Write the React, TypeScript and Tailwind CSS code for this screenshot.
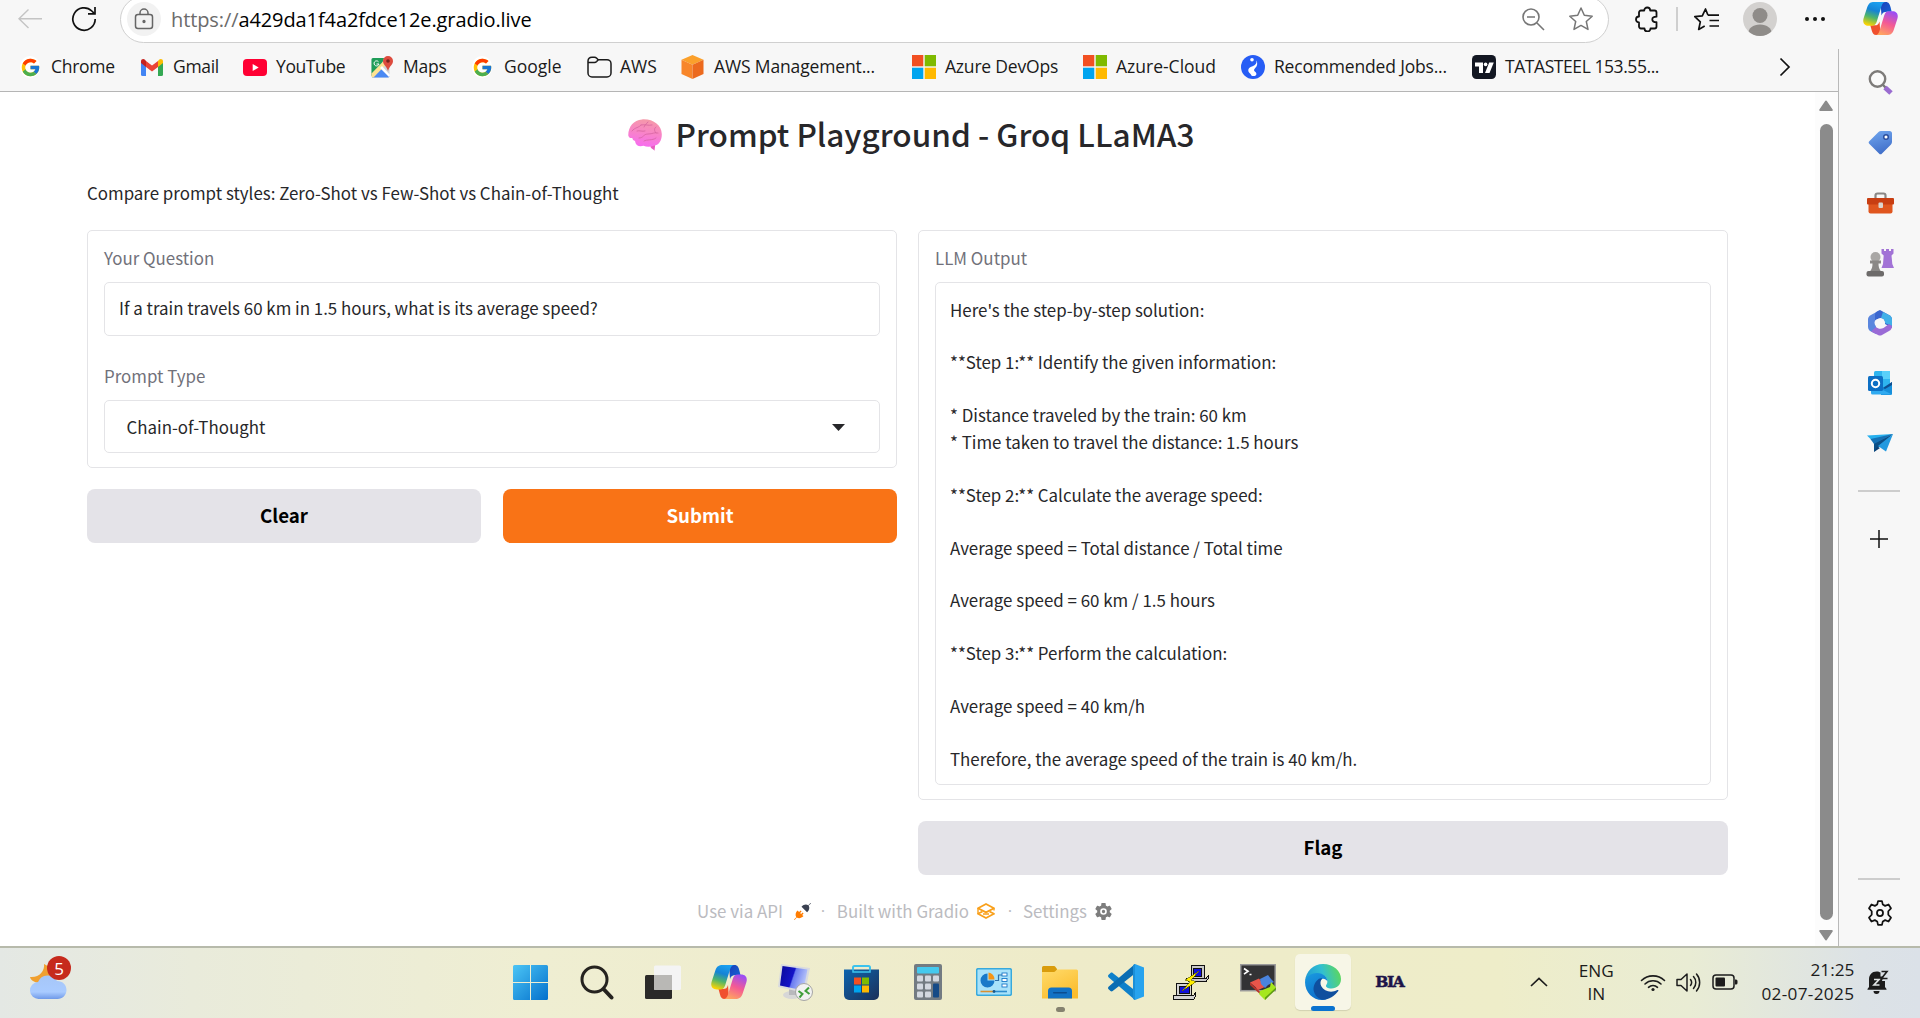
import type { ReactNode } from "react";
import { FcGoogle } from "react-icons/fc";

const UI = "font-['Open_Sans',sans-serif]";
const SRC = "font-['Noto_Sans_CJK_SC',sans-serif]";

function Copilot({ id, className }: { id: string; className: string }) {
  return (
    <svg viewBox="0 0 36 36" className={className}>
      <defs>
        <linearGradient id={id + "a"} x1="0.6" y1="0" x2="0.3" y2="1">
          <stop offset="0" stopColor="#1aa0f0" />
          <stop offset="0.35" stopColor="#1583d6" />
          <stop offset="0.65" stopColor="#4fb56a" />
          <stop offset="1" stopColor="#ffd400" />
        </linearGradient>
        <linearGradient id={id + "b"} x1="0.7" y1="0" x2="0.3" y2="1">
          <stop offset="0" stopColor="#9a4df5" />
          <stop offset="0.5" stopColor="#f45a94" />
          <stop offset="1" stopColor="#ffa560" />
        </linearGradient>
        <linearGradient id={id + "c"} x1="0" y1="0" x2="1" y2="1">
          <stop offset="0" stopColor="#1a3fb8" />
          <stop offset="1" stopColor="#1466d8" />
        </linearGradient>
      </defs>
      <path d="M18 1h5.500c3 0 4 2.200 4.800 5.200L29.500 11H25c-3.500 0-5 1-6 4z" fill={`url(#${id}c)`} />
      <path d="M18 35h-4.500c-2.600 0-3.800-1.800-4.500-4.600L7.500 25H12c3 0 4-1 5-4z" fill="#f0502e" />
      <path d="M11.500 1H23c-2.200.2-3.200 2-4 4.500l-4.800 15.700C13.300 24 12 25.500 9.200 25.500H6C1 25.500-.7 22 .7 17.500L4.500 6C5.800 2.400 7.800 1 11.500 1z" fill={`url(#${id}a)`} />
      <path d="M24.500 35H13c2.200-.2 3.200-2 4-4.500l4.800-15.700c.9-2.800 2.200-4.300 5-4.300H30c5 0 6.700 3.500 5.300 8L31.500 30c-1.300 3.600-3.300 5-7 5z" fill={`url(#${id}b)`} />
    </svg>
  );
}

const Gmail = () => (
  <svg viewBox="0 0 22 17" className="h-[17px] w-[22px]">
    <path d="M0 2.500V15.500a1.500 1.500 0 0 0 1.500 1.500H5V7z" fill="#4285f4" />
    <path d="M17 7v10h3.500a1.500 1.500 0 0 0 1.500-1.500V3z" fill="#34a853" />
    <path d="M17 2v6l5-4V2.500C22 0 19.500-.5 18 .8z" fill="#fbbc04" />
    <path d="M5 8V2l6 4.600L17 2v6l-6 4.500z" fill="#ea4335" />
    <path d="M0 2.500V4l5 4V2L4 .8C2.500-.5 0 0 0 2.500z" fill="#c5221f" />
  </svg>
);

const YouTube = () => (
  <svg viewBox="0 0 24 17" className="h-[17px] w-[24px]">
    <rect width="24" height="17" rx="4" fill="#ff0033" />
    <path d="M9.700 4.900v7.200l6-3.600z" fill="#fff" />
  </svg>
);

const Maps = () => (
  <svg viewBox="0 0 22 22" className="h-[22px] w-[22px]">
    <rect x="0.500" y="2" width="18" height="19.500" rx="1.500" fill="#cfd4d8" />
    <path d="M2 2h11l-3 9-9.500 9V3.500A1.500 1.500 0 0 1 2 2z" fill="#1f9d58" />
    <path d="M9.500 11.500l9 9.200c-.3.500-.8.800-1.500.8H1z" fill="#4a89f3" />
    <path d="M.5 17.500L13 4.500l3 3L2.500 21.500H2A1.500 1.500 0 0 1 .5 20z" fill="#fde293" />
    <path d="M11 10l8 9-1 2L9 12z" fill="#fff" />
    <path d="M7.500 5.800A2.500 2.500 0 1 0 8 8H5.500" stroke="#fff" strokeWidth="1" fill="none" />
    <path d="M17 0a5 5 0 0 0-5 5c0 4 3.500 4.600 5 10 1.500-5.400 5-6 5-10a5 5 0 0 0-5-5z" fill="#dd4b3e" />
    <circle cx="17" cy="5" r="1.800" fill="#7a231c" />
  </svg>
);

const Folder = () => (
  <svg viewBox="0 0 25 22" className="h-[22px] w-[25px]" fill="none" stroke="#1b1b1b" strokeWidth="1.500">
    <path d="M1 5a4 4 0 0 1 4-3.800h2.500c1 0 1.600.4 2.200 1l1.500 1.500H20a4 4 0 0 1 4 4V17a4 4 0 0 1-4 4H5a4 4 0 0 1-4-4z" />
    <path d="M1 6.500h6.500c1 0 1.600-.4 2.200-1l1.500-1.700" />
  </svg>
);

const Cube = () => (
  <svg viewBox="0 0 22 24" className="h-[24px] w-[23px]">
    <path d="M11 0l11 4.800L11 9.800 0 4.800z" fill="#fba02b" />
    <path d="M0 4.800l11 5V24L0 19z" fill="#f8862a" />
    <path d="M22 4.800l-11 5V24l11-5z" fill="#ec6a1e" />
  </svg>
);

const Microsoft = () => (
  <svg viewBox="0 0 24 24" className="h-[24px] w-[24px]">
    <path d="M0 0h11.300v11.300H0z" fill="#f25022" />
    <path d="M12.700 0H24v11.300H12.700z" fill="#7fba00" />
    <path d="M0 12.700h11.300V24H0z" fill="#00a4ef" />
    <path d="M12.700 12.700H24V24H12.700z" fill="#ffb900" />
  </svg>
);

const Jobs = () => (
  <svg viewBox="0 0 24 24" className="h-[24px] w-[24px]">
    <circle cx="12" cy="12" r="12" fill="#275df5" />
    <circle cx="11" cy="4.700" r="1.800" fill="#fff" />
    <path d="M15.500 5.500c.3 3-1 4.700-3.900 5.700-3 1-4.600 2.300-4.300 4.700.2 1.700 2.200 2.200 2.600 3.500.4 1.200 1 1.700 2.600 1.700 1.800 0 3-.9 2.900-2.400-.1-1.700-2.500-2.200-2.400-3.700.1-1.400 2.700-2.800 3.100-5.200.2-1.700 0-3.400-.6-4.300z" fill="#fff" />
  </svg>
);

const TradingView = () => (
  <svg viewBox="0 0 24 24" className="h-[24px] w-[24px]">
    <rect width="24" height="24" rx="4.500" fill="#131722" />
    <path d="M3 7.500h8V18H7v-6.500H3z" fill="#fff" />
    <circle cx="13.600" cy="9.400" r="1.800" fill="#fff" />
    <path d="M17.200 7.500h4.600L17.500 18H13z" fill="#fff" />
  </svg>
);

const G = () => (
  <div className="flex h-[22px] w-[20px] items-center justify-center rounded-full bg-white">
    <FcGoogle className="h-[21px] w-[21px] shrink-0" />
  </div>
);

function Bookmark({ icon, label, box, gap, track = "" }: { icon: ReactNode; label: string; box: string; gap: string; track?: string }) {
  return (
    <div className={`flex h-[26px] shrink-0 items-center whitespace-nowrap ${box} ${gap}`}>
      <div className="flex shrink-0 items-center">{icon}</div>
      <span className={`pb-[2px] ${track}`}>{label}</span>
    </div>
  );
}

function AddressRow() {
  return (
    <div className="flex h-[49px] items-start overflow-hidden">
      <div className="flex h-[38px] w-[120px] shrink-0 items-center">
        <svg viewBox="0 0 26 22" className="ml-[17px] h-[22px] w-[26px]" fill="none" stroke="#c4c4c4" strokeWidth="1.400">
          <path d="M25 10.700H2M11.500 1.500L2 10.700l9.500 9.300" />
        </svg>
        <svg viewBox="0 0 26 26" className="ml-[28px] h-[26px] w-[26px]" fill="none" stroke="#111" strokeWidth="1.700">
          <path d="M24.200 13A11.200 11.200 0 1 1 20.800 5l2.500 2.400" />
          <path d="M24 1v6.800h-7" />
        </svg>
      </div>
      <div className="-mt-[4px] flex h-[46.500px] w-[1489px] shrink-0 items-center rounded-full border-[1.500px] border-[#d0d0d0] bg-white pr-[14px] pl-[6px]">
        <div className="flex h-[34px] w-[34px] items-center justify-center rounded-full bg-[#f2f2f2]">
          <svg viewBox="0 0 20 22" className="h-[22px] w-[20px]" fill="none" stroke="#666" strokeWidth="1.500">
            <rect x="1.500" y="6.500" width="17" height="14" rx="2.500" />
            <path d="M6 6.500V5a4 4 0 0 1 8 0v1.500" />
            <circle cx="10" cy="13.500" r="0.900" fill="#666" />
          </svg>
        </div>
        <div className="ml-[10px] pt-[2px] text-[20px] leading-[28px] tracking-[-0.100px] text-black">
          <span className="text-[#6b6b6b]">https://</span>a429da1f4a2fdce12e.gradio.live
        </div>
        <svg viewBox="0 0 24 24" className="ml-auto h-[24px] w-[24px]" fill="none" stroke="#767676" strokeWidth="1.600">
          <circle cx="10" cy="10" r="8" />
          <path d="M6 10h8M16 16l7 7" />
        </svg>
        <svg viewBox="0 0 26 26" className="ml-[23px] h-[26px] w-[26px]" fill="none" stroke="#767676" strokeWidth="1.500" strokeLinejoin="round">
          <path d="M13 2l3.300 7.300 7.900.9-5.900 5.300 1.700 7.900-7-4-7 4 1.700-7.900-5.900-5.300 7.900-.9z" />
        </svg>
      </div>
      <div className="flex h-[38px] flex-1 items-center">
        <svg viewBox="0 0 24 26" className="ml-[26px] h-[26px] w-[24px]" fill="none" stroke="#111" strokeWidth="1.800" strokeLinejoin="round">
          <path d="M4 6.500a2 2 0 0 1 2-2h3.200a3 3 0 0 1 6 0h4.300a2 2 0 0 1 2 2v4.200c-3 0-4.200.7-4.200 2.700s1.200 2.700 4.200 2.700v4.400a2 2 0 0 1-2 2h-4a3 3 0 0 1-6 0H6a2 2 0 0 1-2-2v-4a3 3 0 0 1 0-6z" />
        </svg>
        <div className="ml-[17px] h-[24px] w-[1.500px] bg-[#cfcfcf]" />
        <svg viewBox="0 0 28 26" className="ml-[15px] h-[26px] w-[28px]" fill="none" stroke="#111" strokeWidth="1.700" strokeLinejoin="round">
          <path d="M15 9.200L12.500 3 9.300 9.800l-7.500.8 5.500 5.200L5.700 23.500l6-3.500M15 9.200h11M16.500 14.500H26M16.500 20H26" />
        </svg>
        <div className="ml-[22px] h-[34px] w-[34px] overflow-hidden rounded-full bg-[#d3d1cf]">
          <svg viewBox="0 0 34 34" className="h-full w-full" fill="#8f8c89">
            <circle cx="17" cy="13.500" r="7.500" />
            <path d="M5 33c0-7 5-10.500 12-10.500S29 26 29 33v1H5z" />
          </svg>
        </div>
        <svg viewBox="0 0 22 6" className="ml-[27px] h-[6px] w-[22px]" fill="#111">
          <circle cx="3" cy="3" r="2" />
          <circle cx="11" cy="3" r="2" />
          <circle cx="19" cy="3" r="2" />
        </svg>
      </div>
    </div>
  );
}

function Bookmarks() {
  return (
    <div className="flex h-[43px] items-start border-b border-[#b5b5b5] pt-[5px] pl-[20px] text-[17.500px] leading-[26px] text-[#1a1a1a]">
      <Bookmark icon={<G />} label="Chrome" box="w-[121px]" gap="gap-[11px]" track="tracking-[-0.3px]" />
      <Bookmark icon={<Gmail />} label="Gmail" box="w-[102px]" gap="gap-[10px]" track="tracking-[-0.3px]" />
      <Bookmark icon={<YouTube />} label="YouTube" box="w-[128px]" gap="gap-[9px]" track="tracking-[-0.4px]" />
      <Bookmark icon={<Maps />} label="Maps" box="w-[101px]" gap="gap-[10px]" track="tracking-[-0.2px]" />
      <Bookmark icon={<G />} label="Google" box="w-[115px]" gap="gap-[12px]" />
      <Bookmark icon={<Folder />} label="AWS" box="w-[94px]" gap="gap-[8px]" />
      <Bookmark icon={<Cube />} label="AWS Management..." box="w-[231px]" gap="gap-[10px]" track="tracking-[-0.14px]" />
      <Bookmark icon={<Microsoft />} label="Azure DevOps" box="w-[171px]" gap="gap-[9px]" track="tracking-[-0.2px]" />
      <Bookmark icon={<Microsoft />} label="Azure-Cloud" box="w-[158px]" gap="gap-[9px]" />
      <Bookmark icon={<Jobs />} label="Recommended Jobs..." box="w-[231px]" gap="gap-[9px]" track="tracking-[-0.18px]" />
      <Bookmark icon={<TradingView />} label="TATASTEEL 153.55..." box="w-[307px]" gap="gap-[9px]" track="tracking-[-0.43px]" />
      <svg viewBox="0 0 12 20" className="mt-[3px] h-[20px] w-[12px]" fill="none" stroke="#111" strokeWidth="1.700">
        <path d="M1.500 1.500l8.500 8.500-8.500 8.500" />
      </svg>
    </div>
  );
}

const Brain = () => (
  <svg viewBox="0 0 34 32" className="h-[32px] w-[34px]">
    <defs>
      <linearGradient id="br" x1="0.6" y1="0" x2="0.4" y2="1">
        <stop offset="0" stopColor="#f59aa8" />
        <stop offset="0.45" stopColor="#f886c4" />
        <stop offset="1" stopColor="#f76cf0" />
      </linearGradient>
    </defs>
    <path d="M23 26l4.300-1-.8 6.800c-1-2-3-1.500-4-3.800z" fill="#e85cc0" />
    <path d="M.3 16.500C0 8 5.500 1 14 .4 25-.4 33.500 6 33.800 15c.2 6.500-3 11.500-8 11.700-3 1.300-7.500 1.300-10.300.1C11 28 7.500 26.500 7 22c-1.500-.3-2.500-1.500-2.700-3-2 .3-3.700-.6-4-2.500z" fill="url(#br)" />
    <g fill="none" stroke="#d2609c" strokeWidth="0.900" strokeLinecap="round" opacity="0.8">
      <path d="M4 12c3-4 7-3 9-6M13 6c4-1 7 1 11 0M11 19c5 0 4-4 9-4s6-2 10-1M9 12c3-1 5 1 8 0M20 3c-1 2-3 2-4 5M28 8c-2 1-2 4 0 6M16 22c3-2 8 0 12-3" />
    </g>
  </svg>
);

const Label = ({ children }: { children: string }) => (
  <div className="h-[26px] text-[16.900px] leading-[26px] text-[#71717a]">{children}</div>
);

const OUTPUT = `Here's the step-by-step solution:

**Step 1:** Identify the given information:

* Distance traveled by the train: 60 km
* Time taken to travel the distance: 1.5 hours

**Step 2:** Calculate the average speed:

Average speed = Total distance / Total time

Average speed = 60 km / 1.5 hours

**Step 3:** Perform the calculation:

Average speed = 40 km/h

Therefore, the average speed of the train is 40 km/h.`;

const Btn = ({ label, look }: { label: string; look: string }) => (
  <button className={`flex h-[54px] flex-1 items-center justify-center rounded-[8px] pb-[2px] text-[18.700px] leading-[28px] font-bold ${look}`}>{label}</button>
);

function Page() {
  return (
    <main className={`flex flex-1 flex-col bg-white pl-[87px] text-[#27272a] ${SRC}`}>
      <div className="mt-[19px] flex h-[48px] w-[1648px] items-center justify-center gap-[14px]">
        <Brain />
        <h1 className="pb-[4px] text-[31.550px] leading-[44px] font-medium whitespace-nowrap">Prompt Playground - Groq LLaMA3</h1>
      </div>
      <p className="mt-[21px] h-[26px] text-[16.900px] leading-[26px]">Compare prompt styles: Zero-Shot vs Few-Shot vs Chain-of-Thought</p>
      <div className="mt-[24px] flex w-[1641px] gap-[21px]">
        <section className="flex flex-1 flex-col gap-[21px]">
          <div className="h-[238px] rounded-[5px] border border-[#e4e4e7] px-[16px] pt-[14px]">
            <Label>Your Question</Label>
            <div className="mt-[11px] flex h-[54px] items-center rounded-[5px] border border-[#e4e4e7] pb-[2px] pl-[14px] text-[16.900px] leading-[26px]">
              If a train travels 60 km in 1.5 hours, what is its average speed?
            </div>
            <div className="mt-[27px]">
              <Label>Prompt Type</Label>
            </div>
            <div className="mt-[11px] flex h-[53px] items-center justify-between rounded-[5px] border border-[#e4e4e7] pr-[34px] pl-[21.500px] text-[16.900px] leading-[26px]">
              Chain-of-Thought
              <svg viewBox="0 0 13 7" className="mt-[2px] h-[7px] w-[13px]" fill="#27272a">
                <path d="M0 0h13L6.500 7z" />
              </svg>
            </div>
          </div>
          <div className="flex gap-[22px]">
            <Btn label="Clear" look="bg-[#e4e3e8] text-black" />
            <Btn label="Submit" look="bg-[#f97316] text-white" />
          </div>
        </section>
        <section className="flex flex-1 flex-col gap-[21px]">
          <div className="h-[570px] rounded-[5px] border border-[#e4e4e7] px-[16px] pt-[14px]">
            <Label>LLM Output</Label>
            <div className="mt-[11px] h-[503px] rounded-[5px] border border-[#e4e4e7] pt-[13.500px] pl-[14px] text-[16.900px] leading-[26.460px] whitespace-pre">{OUTPUT}</div>
          </div>
          <div className="flex">
            <Btn label="Flag" look="bg-[#e4e3e8] text-black" />
          </div>
        </section>
      </div>
      <footer className="mt-[23px] flex h-[26px] w-[1637px] items-center justify-center text-[16.900px] leading-[26px] text-[#bbbbc0]">
        <span>Use via API</span>
        <svg viewBox="0 0 17 17" className="ml-[11px] h-[17px] w-[17px]">
          <path d="M16.500 0l-2.200 2.200C12 .8 9.500 1.500 7.500 3.700l5.600 5.600c2.200-2.100 2.900-4.500 1.500-6.900L17 .5z" fill="#3b4252" />
          <path d="M0 16.500l2.300-2.300C1 12 1.500 9.500 3.500 7.500l1.600 1.600 1.500-1.500 1 1-1.500 1.500 1 1 1.500-1.500 1 1-1.500 1.500L9.500 13c-2.200 2.200-4.500 2.700-6.700 1.500L.6 17z" fill="#ff7c00" />
        </svg>
        <span className="ml-[9px] w-[6px] text-center font-['Open_Sans',sans-serif]">·</span>
        <span className="ml-[11px]">Built with Gradio</span>
        <svg viewBox="0 0 18 16" className="ml-[8px] h-[16px] w-[18px]" fill="none" stroke="#f9a01b" strokeWidth="1.800" strokeLinejoin="round">
          <path d="M9 1L17 5.200 9 9.400 1 5.200z" />
          <path d="M5.500 8.500L1 10.800 9 15l8-4.200-4.500-2.300" />
          <path d="M1 5.200v5.600M17 5.200v2.300M6 11h6" strokeWidth="1.400" />
        </svg>
        <span className="ml-[12px] w-[6px] text-center font-['Open_Sans',sans-serif]">·</span>
        <span className="ml-[10px]">Settings</span>
        <svg viewBox="0 0 24 24" className="ml-[6px] h-[21px] w-[21px]" fill="#7d7d7d">
          <path fillRule="evenodd" d="M19.140 12.940c.04-.3.06-.61.06-.94s-.02-.64-.07-.94l2.030-1.580c.18-.14.230-.41.120-.61l-1.920-3.320c-.12-.22-.37-.29-.59-.22l-2.390.96c-.5-.38-1.030-.7-1.620-.94l-.36-2.540c-.04-.24-.24-.41-.48-.41h-3.840c-.24 0-.43.17-.47.41l-.36 2.540c-.59.24-1.130.57-1.620.94l-2.390-.96c-.22-.08-.47 0-.59.22L2.740 8.870c-.12.21-.08.47.12.61l2.030 1.580c-.05.3-.09.63-.09.94s.02.64.07.94l-2.030 1.580c-.18.14-.23.41-.12.61l1.920 3.320c.12.22.37.29.59.22l2.390-.96c.5.38 1.030.7 1.620.94l.36 2.540c.05.24.24.41.48.41h3.840c.24 0 .44-.17.47-.41l.36-2.540c.59-.24 1.130-.56 1.620-.94l2.390.96c.22.08.47 0 .59-.22l1.920-3.320c.12-.22.07-.47-.12-.61l-2.010-1.580zM12 8.200a3.800 3.800 0 1 0 0 7.600 3.800 3.800 0 0 0 0-7.600zm0 1.900a1.900 1.900 0 1 1 0 3.800 1.900 1.900 0 0 1 0-3.800z" />
        </svg>
      </footer>
    </main>
  );
}

const Slot = ({ children }: { children: ReactNode }) => <div className="flex h-[60px] w-full shrink-0 items-center justify-center">{children}</div>;

function Sidebar() {
  return (
    <aside className="flex w-[82px] shrink-0 flex-col bg-[#f7f7f7]">
      <div className="flex h-[49px] justify-center pt-[1px] pl-[2px]">
        <Copilot id="cs" className="h-[35px] w-[35px]" />
      </div>
      <div className="flex flex-1 flex-col items-center border-l-[1.500px] border-[#b9b9b9] pt-[3px] pl-[1px]">
        <Slot>
          <svg viewBox="0 0 25 25" className="h-[25px] w-[25px]" fill="none">
            <circle cx="9.500" cy="9" r="7.700" stroke="#7d7b79" strokeWidth="2.400" fill="#fafafa" />
            <path d="M15 15l3 3" stroke="#777" strokeWidth="2.400" />
            <path d="M17 17.500l6 5.500" stroke="#9a6cd0" strokeWidth="5" />
          </svg>
        </Slot>
        <Slot>
          <svg viewBox="0 0 25 25" className="h-[25px] w-[25px]">
            <defs>
              <linearGradient id="tag" x1="0.3" y1="0" x2="0.6" y2="1">
                <stop offset="0" stopColor="#6ea3ec" />
                <stop offset="1" stopColor="#3f6dc8" />
              </linearGradient>
            </defs>
            <path d="M13 1h8.500A2.500 2.500 0 0 1 24 3.500V12c0 1-.4 1.800-1 2.500l-9 9a2 2 0 0 1-3 0l-9.500-9.500a2 2 0 0 1 0-3L10.500 2c.7-.7 1.500-1 2.500-1z" fill="url(#tag)" />
            <circle cx="18" cy="7" r="2.300" fill="#fff" stroke="#2b4f9e" strokeWidth="1.500" />
          </svg>
        </Slot>
        <Slot>
          <svg viewBox="0 0 27 22" className="mt-[2px] h-[22px] w-[27px]">
            <path d="M8.500 6V3.500a2 2 0 0 1 2-2h6a2 2 0 0 1 2 2V6" fill="none" stroke="#8a8785" strokeWidth="2.200" />
            <path d="M1.500 9h24v10.500a2 2 0 0 1-2 2h-20a2 2 0 0 1-2-2z" fill="#e0561f" />
            <rect y="6" width="27" height="6.500" rx="1" fill="#c83e12" />
            <rect x="11.500" y="10.500" width="4.500" height="5.500" rx="1" fill="#dcd5cf" />
          </svg>
        </Slot>
        <Slot>
          <svg viewBox="0 0 28 28" className="mt-[2px] h-[28px] w-[28px]">
            <path d="M15.500 0h2.500v2h2V0h3v2h2V0h2.500v4.500l-2 2 .8 8.500 1.700 4H15.500l1.500-4 .7-8.500-2.200-2z" fill="#a273d6" />
            <circle cx="9.500" cy="8" r="5" fill="#a9a7a5" />
            <path d="M4 11.500h11v3h-2.500c0 3 .5 5.500 2.500 8H4c2-2.500 2.500-5 2.500-8H4z" fill="#8a8886" />
            <rect x="0.500" y="22" width="17.500" height="5.500" rx="2" fill="#6d6b6a" />
          </svg>
        </Slot>
        <Slot>
          <svg viewBox="0 0 24 26" className="mt-[2px] h-[26px] w-[24px]">
            <path d="M12 0L3 5C1 6 0 7.500 0 9.500v7C0 19 1 20.500 3 21.500L8 24v-7.500C6 14 6 11 8 9.500V4.500z" fill="#5a86de" />
            <path d="M9 1.500L12 0l9 5c2 1 3 2.500 3 4.500V18l-7-4c.5-3-1-6-4.500-6L7 10V5c0-1.500.7-2.800 2-3.500z" fill="#3b66cf" />
            <path d="M15 2l6 3c2 1 3 2.500 3 4.500V16l-7-3c0-3-1.500-4.800-4-5z" fill="#41b0e8" />
            <path d="M24 16c0 2.500-1 4-3 5l-7 4c-1.300.8-2.700.8-4 0l-7-3.500 5-4.500c2 2 5 2.300 7.500 1L21 14z" fill="#9a6bd6" />
            <circle cx="12" cy="13" r="4.500" fill="#f7f7f7" />
          </svg>
        </Slot>
        <Slot>
          <svg viewBox="0 0 24 24" className="mt-[2px] h-[24px] w-[24px]">
            <rect x="6" width="16" height="22" rx="1.500" fill="#2fb5ef" />
            <path d="M14 0h8v8h-8z" fill="#59d0fa" />
            <path d="M24 11l-11 7v6h9.500a1.500 1.500 0 0 0 1.500-1.500z" fill="#168fdb" />
            <path d="M3 13l21 10.500H4.500A1.500 1.500 0 0 1 3 22z" fill="#30aaf0" />
            <path d="M24 11l-9 6 2 1 7-4z" fill="#0f4f8f" />
            <rect y="5" width="15" height="15" rx="1.500" fill="#0d6fc4" />
            <circle cx="7.500" cy="12.500" r="3.700" fill="none" stroke="#fff" strokeWidth="2" />
          </svg>
        </Slot>
        <Slot>
          <svg viewBox="0 0 26 18" className="mt-[2px] h-[18px] w-[26px]">
            <path d="M0 1.500L26 0 7.500 9z" fill="#27b0ee" />
            <path d="M26 0L7 9v9z" fill="#0b4f87" />
            <path d="M3.500 5L26 0 7 10z" fill="#1571b5" />
            <path d="M26 0l-7 17.500L11 12z" fill="#2199df" />
            <path d="M7 18l3-5 3 1z" fill="#0c3f73" />
          </svg>
        </Slot>
        <div className="mt-[18px] mr-[2px] h-[1.500px] w-[42px] bg-[#cdcdcd]" />
        <svg viewBox="0 0 18 18" className="mt-[38px] mr-[3px] h-[18px] w-[18px]" stroke="#111" strokeWidth="1.500">
          <path d="M9 0v18M0 9h18" />
        </svg>
        <div className="mt-auto mr-[2px] h-[2px] w-[42px] bg-[#cdcdcd]" />
        <svg viewBox="0 0 24 24" className="mt-[19px] mr-[1px] mb-[19px] h-[28px] w-[28px]" fill="none" stroke="#111" strokeWidth="1.500" strokeLinejoin="round">
          <path d="M10.300 1.800h3.400l.7 3 2 1.100 2.900-1.200 2.100 3.300-2.300 2.500v3l2.300 2.500-2.100 3.300-2.900-1.200-2 1.100-.7 3h-3.400l-.7-3-2-1.100-2.900 1.200L2.600 16l2.300-2.500v-3L2.600 8l2.100-3.300 2.900 1.200 2-1.100z" />
          <circle cx="12" cy="12" r="2.600" />
        </svg>
      </div>
    </aside>
  );
}

function Edge() {
  return (
    <svg viewBox="0 0 36 36" className="h-[36px] w-[36px]">
      <defs>
        <linearGradient id="e1" x1="0" y1="0.5" x2="1" y2="0.3">
          <stop offset="0" stopColor="#1f9ad6" />
          <stop offset="0.5" stopColor="#32bfd0" />
          <stop offset="1" stopColor="#5fd956" />
        </linearGradient>
        <linearGradient id="e2" x1="0" y1="0" x2="0.4" y2="1">
          <stop offset="0" stopColor="#1a9be0" />
          <stop offset="1" stopColor="#0d6fcb" />
        </linearGradient>
      </defs>
      <path d="M0 17C1 7 8.500 0 18 0c10.500 0 18 7 18 15 0 6-4.500 9.500-9.500 9.500-4 0-6-1.500-5.500-3 1-1.500 1.600-3 1.300-5C21.500 12.500 18 10.500 13 10.500 6 10.500 1.500 14 0 18z" fill="url(#e1)" />
      <path d="M0 18c.8-5.500 6-9 12-9 6.500 0 10.500 4.500 10.500 8.500-1.500-2.300-3.500-3-5.500-2.500-4 1.500-6 6-4 11 1.800 4.500 5.500 7.500 10 8.500-2 1-4 1.500-6 1.500C8 36 0 28.500 0 18z" fill="url(#e2)" />
      <path d="M14 14.800c-4 3-6.500 8-5 13 1.200 4 4.500 7.500 9 8 6 0 11.500-3.500 15.300-8.700.4-.8-.2-1.300-1-1-5.800 3-13.300 1.500-16-3.800-1.400-2.800-1-6 .9-7.900-1-.3-2.200-.1-3.200.4z" fill="#0f4f9e" />
    </svg>
  );
}

const Task = ({ children }: { children: ReactNode }) => <div className="flex h-[60px] w-[66.100px] shrink-0 items-center justify-center">{children}</div>;

const Putty = () => (
  <svg viewBox="0 0 36 36" className="h-[36px] w-[36px]" shapeRendering="crispEdges">
    <g stroke="#111" strokeWidth="1">
      <path d="M18 1.500h13v13H18zM14 14.500h19l2.500-3v3l-2.500 3H16z" fill="#c9c9c9" />
      <path d="M20 4h8.500v8H20z" fill="#1010dd" />
      <path d="M3.500 19.500h15v12h-15zM.5 31.500h20l2-3v4l-2 3H.5z" fill="#d4d4d4" />
      <path d="M6 22h10v7.500H6z" fill="#1010dd" />
    </g>
    <path d="M26 7L12 16l5 2-8 9 14-9-5-2z" fill="#ffee00" stroke="#555500" strokeWidth="0.600" />
  </svg>
);

function Taskbar() {
  return (
    <div className="flex h-[72px] items-start border-t-2 border-[#b7baab] bg-[linear-gradient(to_right,#e4e8e4_0%,#e9ebdb_10%,#efeed2_28%,#eeebc9_55%,#eeedc9_78%,#e9ecd4_88%,#dce2e6_97%,#dbe1e8_100%)] text-[#1c1c1c]">
      <div className="w-[497px] shrink-0 pt-[6px] pl-[29px]">
        <div className="relative h-[44px] w-[44px]">
          <svg viewBox="0 0 38 36" className="absolute top-[10px] left-0 h-[36px] w-[38px]">
            <defs>
              <linearGradient id="cl" x1="0" y1="0" x2="0" y2="1">
                <stop offset="0" stopColor="#a6c6f7" />
                <stop offset="0.7" stopColor="#a9cbff" />
                <stop offset="1" stopColor="#6f99e8" />
              </linearGradient>
            </defs>
            <path d="M15 0c1 7-5 14-14 13 1 4 6 6 11 6 8 0 13-7 12-14z" fill="#f0a030" />
            <path d="M10 35a8.500 8.500 0 0 1-1-17 10.500 10.500 0 0 1 19-1c6 0 9.500 4 9.500 9s-4 9-9 9z" fill="url(#cl)" />
          </svg>
          <div className="absolute top-[2px] left-[18px] flex h-[24px] w-[24px] items-center justify-center rounded-full bg-[#c62a1c] text-[17px] leading-none text-white">5</div>
        </div>
      </div>
      <div className="flex h-[70px] items-center pb-[2px]">
        <Task>
          <svg viewBox="0 0 35 35" className="h-[35px] w-[35px]">
            <defs>
              <linearGradient id="wn" x1="0" y1="0" x2="1" y2="1">
                <stop offset="0" stopColor="#4cc5f5" />
                <stop offset="1" stopColor="#0370cc" />
              </linearGradient>
            </defs>
            <path d="M1.500 0H17v17H0V1.500A1.500 1.500 0 0 1 1.500 0zM18 0h15.500A1.500 1.500 0 0 1 35 1.500V17H18zM0 18h17v17H1.500A1.500 1.500 0 0 1 0 33.500zM18 18h17v15.500a1.500 1.500 0 0 1-1.500 1.500H18z" fill="url(#wn)" />
          </svg>
        </Task>
        <Task>
          <svg viewBox="0 0 34 35" className="ml-[2px] h-[35px] w-[34px]" fill="none" stroke="#25231f" strokeLinecap="round">
            <circle cx="14.500" cy="14.500" r="12.500" strokeWidth="3" />
            <path d="M24 24.500l7.500 8" strokeWidth="4" />
          </svg>
        </Task>
        <Task>
          <svg viewBox="0 0 36 34" className="ml-[2px] h-[34px] w-[36px]">
            <rect y="10" width="27" height="24" rx="1.500" fill="#2b2a28" />
            <rect x="9" y="0.500" width="27" height="24.500" rx="1.500" fill="#f4f4f4" />
            <path d="M9 10h18v15H10.500A1.500 1.500 0 0 1 9 23.500z" fill="#b9b8b5" />
          </svg>
        </Task>
        <Task>
          <Copilot id="ct" className="ml-[2px] h-[36px] w-[36px]" />
        </Task>
        <Task>
          <svg viewBox="0 0 36 37" className="ml-[1px] h-[37px] w-[36px]">
            <defs>
              <linearGradient id="rd" x1="0" y1="0.3" x2="1" y2="0.6">
                <stop offset="0" stopColor="#0a0aa0" />
                <stop offset="0.45" stopColor="#1414c8" />
                <stop offset="0.5" stopColor="#6a7cf0" />
                <stop offset="1" stopColor="#c3d0fb" />
              </linearGradient>
            </defs>
            <ellipse cx="15" cy="31" rx="9" ry="4" fill="#d7d7d7" />
            <path d="M12 24h8l1 7h-9z" fill="#b9b9bd" />
            <path d="M4 0l29 4-5 25L1 23z" fill="#d8dadf" />
            <path d="M5.500 2l25 3.500-4 21L3 21.500z" fill="url(#rd)" />
            <circle cx="27" cy="28" r="8.500" fill="#f2f2f2" stroke="#a5a5a5" strokeWidth="1" />
            <path d="M21.500 27l4 3-3 3.500M32 23.500l-3.500 3.500 4 3" fill="none" stroke="#3f9e3a" strokeWidth="2" />
          </svg>
        </Task>
        <Task>
          <svg viewBox="0 0 35 35" className="ml-[2px] h-[35px] w-[35px]">
            <defs>
              <linearGradient id="st" x1="0" y1="0" x2="1" y2="1">
                <stop offset="0" stopColor="#0d64ae" />
                <stop offset="1" stopColor="#1c3059" />
              </linearGradient>
            </defs>
            <path d="M9 6V2.500A1.500 1.500 0 0 1 10.500 1h14A1.500 1.500 0 0 1 26 2.500V6" fill="none" stroke="#3cc3ee" strokeWidth="2" />
            <path d="M0 4.500h35V30a5 5 0 0 1-5 5H5a5 5 0 0 1-5-5z" fill="url(#st)" />
            <path d="M9 4v3h17V4" fill="none" stroke="#3cc3ee" strokeWidth="1.500" />
            <path d="M10 12.500h7v7h-7z" fill="#f25022" />
            <path d="M18 12.500h7v7h-7z" fill="#7fba00" />
            <path d="M10 20.500h7v7h-7z" fill="#00a4ef" />
            <path d="M18 20.500h7v7h-7z" fill="#ffb900" />
          </svg>
        </Task>
        <Task>
          <svg viewBox="0 0 28 36" className="ml-[2px] h-[36px] w-[28px]">
            <rect width="28" height="36" rx="2" fill="#737b82" />
            <rect x="3" y="3" width="22" height="6.500" rx="1" fill="#45c9ee" />
            <g fill="#d3d8e0">
              <rect x="3" y="11.500" width="6" height="6" rx="1" />
              <rect x="11" y="11.500" width="6" height="6" rx="1" />
              <rect x="19" y="11.500" width="6" height="6" rx="1" />
              <rect x="3" y="19.500" width="6" height="6" rx="1" />
              <rect x="11" y="19.500" width="6" height="6" rx="1" />
              <rect x="3" y="27.500" width="6" height="6" rx="1" />
              <rect x="11" y="27.500" width="6" height="6" rx="1" />
            </g>
            <rect x="19" y="19.500" width="6" height="14" rx="1" fill="#164a86" />
          </svg>
        </Task>
        <Task>
          <svg viewBox="0 0 36 28" className="ml-[2px] h-[28px] w-[36px]">
            <rect x="0.700" y="0.700" width="34.600" height="26.600" rx="1.500" fill="#a8e2fa" stroke="#38a9dc" strokeWidth="1.500" />
            <path d="M11.500 12.500V5.500A7 7 0 1 0 18.500 12.500z" fill="#1979c9" />
            <path d="M12.500 11.500V4.500a7 7 0 0 1 6 7z" fill="#f59416" />
            <path d="M19 12.500h3.500V7H26" fill="none" stroke="#2f6fa8" strokeWidth="1.200" />
            <g fill="#fff" stroke="#1979c9" strokeWidth="0.900">
              <rect x="26" y="5" width="5" height="3" />
              <rect x="26" y="10.500" width="5" height="3" />
              <rect x="26" y="16" width="5" height="3" />
            </g>
            <path d="M4.500 23.500H17" stroke="#d99030" strokeWidth="1.600" />
            <path d="M18 23.500h13" stroke="#2d8ccc" strokeWidth="1.600" />
            <circle cx="18" cy="23.500" r="1.400" fill="#17598f" />
          </svg>
        </Task>
        <Task>
          <div className="relative ml-[2px]">
            <svg viewBox="0 0 36 34" className="h-[34px] w-[36px]">
              <defs>
                <linearGradient id="fo" x1="0" y1="0" x2="0.6" y2="1">
                  <stop offset="0" stopColor="#ffdb6b" />
                  <stop offset="1" stopColor="#fbbd2e" />
                </linearGradient>
              </defs>
              <path d="M0 2.500A1.500 1.500 0 0 1 1.500 1h10c1 0 1.500.3 2 1L15 4v6H0z" fill="#d99c0c" />
              <path d="M0 7h11c1.500 0 2-.5 3-1.500l1-1h19.500A1.500 1.500 0 0 1 36 6v27.500H0z" fill="url(#fo)" />
              <path d="M6 33.500V26a3.500 3.500 0 0 1 3.500-3.500h17A3.500 3.500 0 0 1 30 26v7.500z" fill="#1272c4" />
              <rect x="11" y="27" width="14" height="1.500" rx="0.700" fill="#0b4d90" />
            </svg>
            <div className="absolute top-[42px] left-[14px] h-[5px] w-[9px] rounded-full bg-[#85826f]" />
          </div>
        </Task>
        <Task>
          <svg viewBox="0 0 36 36" className="ml-[2px] h-[36px] w-[36px]">
            <path d="M27 0l9 3.500v29L27 36l-.5-8V8z" fill="#27a3ee" />
            <path d="M27 36L.8 13.500C-.2 12.700-.2 11.500.6 10.700L2.500 9c.7-.6 1.500-.6 2.200 0L27 26.500z" fill="#0f80ca" />
            <path d="M27 0L.8 22.500c-1 .8-1 2-.2 2.800L2.500 27c.7.6 1.500.6 2.200 0L27 9.500z" fill="#0a6db3" />
            <path d="M27 0v36l-2-1V1z" fill="#1b8fd8" />
          </svg>
        </Task>
        <Task>
          <Putty />
        </Task>
        <Task>
          <svg viewBox="0 0 36 36" className="ml-[2px] h-[36px] w-[36px]">
            <rect x="0.700" y="0.700" width="34.500" height="26" fill="#333335" stroke="#9a9a9a" strokeWidth="1.500" />
            <path d="M4 4.500l4 2.800-4 2.800M9.500 10.500h2" fill="none" stroke="#fff" strokeWidth="1.700" />
            <path d="M10 18.500l9-4 4 5 3 3-9 4-1-3z" fill="#e8554a" />
            <path d="M10 18.500l12 11v2.500L10 21z" fill="#b7332b" />
            <path d="M20 15l8-4 3 4 3 3-6 3-3 3-4-4z" fill="#4a84de" />
            <path d="M20 27l10-4 1-5 5 5.500L25 36l-6-6z" fill="#a6e71d" />
            <path d="M25 33.500l11-10v2L25 36z" fill="#5f9c12" />
          </svg>
        </Task>
        <div className="flex w-[66.100px] justify-center">
          <div className="relative flex h-[56px] w-[56px] items-center justify-center rounded-[5px] bg-[#f7f6e7] shadow-[0_1px_1px_rgba(0,0,0,0.12)]">
            <Edge />
            <div className="absolute bottom-[-1px] h-[5px] w-[24px] rounded-full bg-[#0a72cf]" />
          </div>
        </div>
        <Task>
          <span className="font-['DejaVu_Serif',serif] text-[15.500px] leading-none font-bold tracking-[-1.500px] text-[#1d1448] [-webkit-text-stroke:0.500px_#1d1448]">BIA</span>
        </Task>
      </div>
      <div className="flex h-[70px] flex-1 items-center pb-[2px]">
        <svg viewBox="0 0 18 10" className="ml-[108px] h-[10px] w-[18px]" fill="none" stroke="#1c1c1c" strokeWidth="1.700">
          <path d="M1 9l8-7.500L17 9" />
        </svg>
        <div className="ml-[30px] flex w-[36px] flex-col items-center text-[17.200px] leading-[23px]">
          <span>ENG</span>
          <span>IN</span>
        </div>
        <svg viewBox="0 0 26 19" className="ml-[26px] h-[19px] w-[26px]" fill="none" stroke="#1c1c1c" strokeWidth="1.600" strokeLinecap="round">
          <path d="M1.500 7.500a16.500 16.500 0 0 1 23 0M5 11a11.500 11.500 0 0 1 16 0M8.500 14.300a6.500 6.500 0 0 1 9 0" />
          <circle cx="13" cy="16.500" r="1.600" fill="#1c1c1c" stroke="none" />
        </svg>
        <svg viewBox="0 0 26 21" className="ml-[10px] h-[21px] w-[26px]" fill="none" stroke="#1c1c1c" strokeWidth="1.500" strokeLinejoin="round" strokeLinecap="round">
          <path d="M1 7.500h4l6-5.500v17l-6-5.500H1z" />
          <path d="M14.500 7.500a5 5 0 0 1 0 6M17.500 4.500a9 9 0 0 1 0 12M20.500 2a13 13 0 0 1 0 17" />
        </svg>
        <svg viewBox="0 0 26 16" className="ml-[10px] h-[16px] w-[26px]">
          <rect x="1" y="1" width="21" height="14" rx="3" fill="none" stroke="#1c1c1c" strokeWidth="1.500" />
          <rect x="3.500" y="3.500" width="9.500" height="9" rx="1" fill="#1c1c1c" />
          <path d="M23 5.500h1a1.500 1.500 0 0 1 1.500 1.500v2a1.500 1.500 0 0 1-1.500 1.500h-1z" fill="#1c1c1c" />
        </svg>
        <div className="ml-[19px] flex w-[97px] flex-col items-end text-[17.200px] leading-[24px]">
          <span>21:25</span>
          <span className="tracking-[0.320px]">02-07-2025</span>
        </div>
        <svg viewBox="0 0 22 24" className="ml-[13px] h-[24px] w-[22px]">
          <path d="M2 17V9.500C2 5 5 1.500 9.500 1.500c2 0 3 .5 4 1v4h3l-1.500 4.500h3V17l1.500 2v.8H.5V19zM6.500 21h6a3 3 0 0 1-6 0z" fill="#1c1c1c" />
          <path d="M7 9.500h5l-5 5.500h5.500" fill="none" stroke="#e0e4e4" strokeWidth="1.700" />
          <path d="M14.500 1.500H20L14.500 8.500H20.500" fill="none" stroke="#1c1c1c" strokeWidth="1.600" />
        </svg>
      </div>
    </div>
  );
}

export default function App() {
  return (
    <div className={`flex h-[1018px] w-[1920px] flex-col overflow-hidden bg-[#f7f7f7] ${UI}`}>
      <div className="flex h-[946px]">
        <div className="flex w-[1838px] shrink-0 flex-col">
          <AddressRow />
          <Bookmarks />
          <div className="flex flex-1">
            <Page />
            <div className="flex w-[23px] flex-col items-center bg-[#fcfcfc] pt-[8px] pr-[1px] pb-[5px]">
              <svg viewBox="0 0 14 11" className="h-[11px] w-[14px]" fill="#8b8b8b" stroke="#8b8b8b" strokeWidth="2" strokeLinejoin="round">
                <path d="M7 1.500L12.800 10H1.200z" />
              </svg>
              <div className="mt-[13px] mb-[10px] w-[13px] flex-1 rounded-full bg-[#8b8b8b]" />
              <svg viewBox="0 0 14 11" className="h-[11px] w-[14px]" fill="#8b8b8b" stroke="#8b8b8b" strokeWidth="2" strokeLinejoin="round">
                <path d="M7 9.500L12.800 1H1.200z" />
              </svg>
            </div>
          </div>
        </div>
        <Sidebar />
      </div>
      <Taskbar />
    </div>
  );
}
